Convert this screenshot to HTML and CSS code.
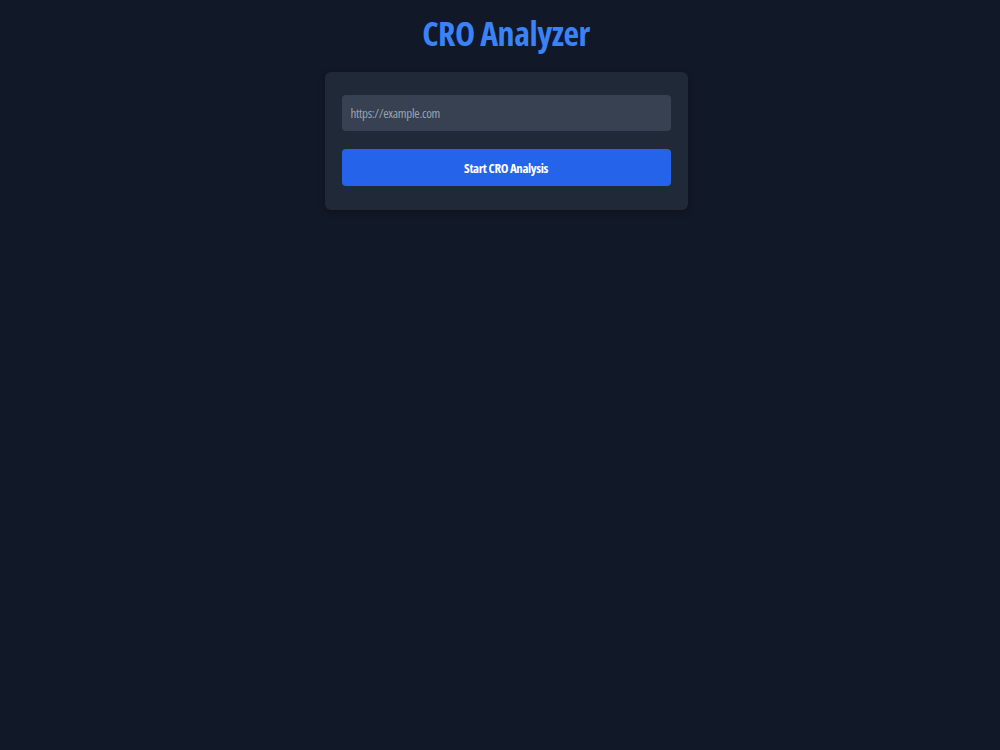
FILE: index.html
```html
<!DOCTYPE html>
<html lang="en">
<head>
    <meta charset="UTF-8">
    <meta name="viewport" content="width=device-width, initial-scale=1.0">
    <title>CRO Analyzer</title>
    <link rel="stylesheet" href="styles.css">
</head>
<body>
    <div class="container">
        <h1 class="title">CRO Analyzer</h1>
        <form class="card" id="analyze-form">
            <input type="url" id="url" class="url-input" placeholder="https://example.com">
            <button type="submit" class="btn">Start CRO Analysis</button>
        </form>
    </div>
</body>
</html>
```
FILE: styles.css
```css
body {
    margin: 0;
    background-color: #111827;
    font-family: "Open Sans", sans-serif;
    font-stretch: 75%;
    min-height: 100vh;
}
.container {
    width: 363px;
    margin: 0 auto;
    padding-top: 11px;
    position: relative;
    left: 6px;
}
.title {
    margin: 0 0 17px;
    text-align: center;
    font-size: 34px;
    line-height: 44px;
    font-weight: bold;
    letter-spacing: -0.5px;
    color: #3b82f6;
}
.card {
    display: flex;
    flex-direction: column;
    gap: 18px;
    background: #1f2937;
    border-radius: 6px;
    padding: 23px 17px 24px;
    box-shadow: 0 2px 6px rgba(0, 0, 0, 0.25);
}
.url-input {
    height: 36px;
    box-sizing: border-box;
    padding: 0 9px;
    background: #374151;
    border: none;
    border-radius: 4px;
    color: #e5e7eb;
    font-family: inherit;
    font-stretch: inherit;
    font-size: 13px;
    letter-spacing: -0.3px;
}
.url-input::placeholder {
    color: #9ca3af;
}
.btn {
    height: 37px;
    background: #2563eb;
    color: white;
    border: none;
    border-radius: 4px;
    font-family: inherit;
    font-stretch: inherit;
    font-size: 13px;
    font-weight: bold;
    letter-spacing: -0.4px;
    cursor: pointer;
}
```
